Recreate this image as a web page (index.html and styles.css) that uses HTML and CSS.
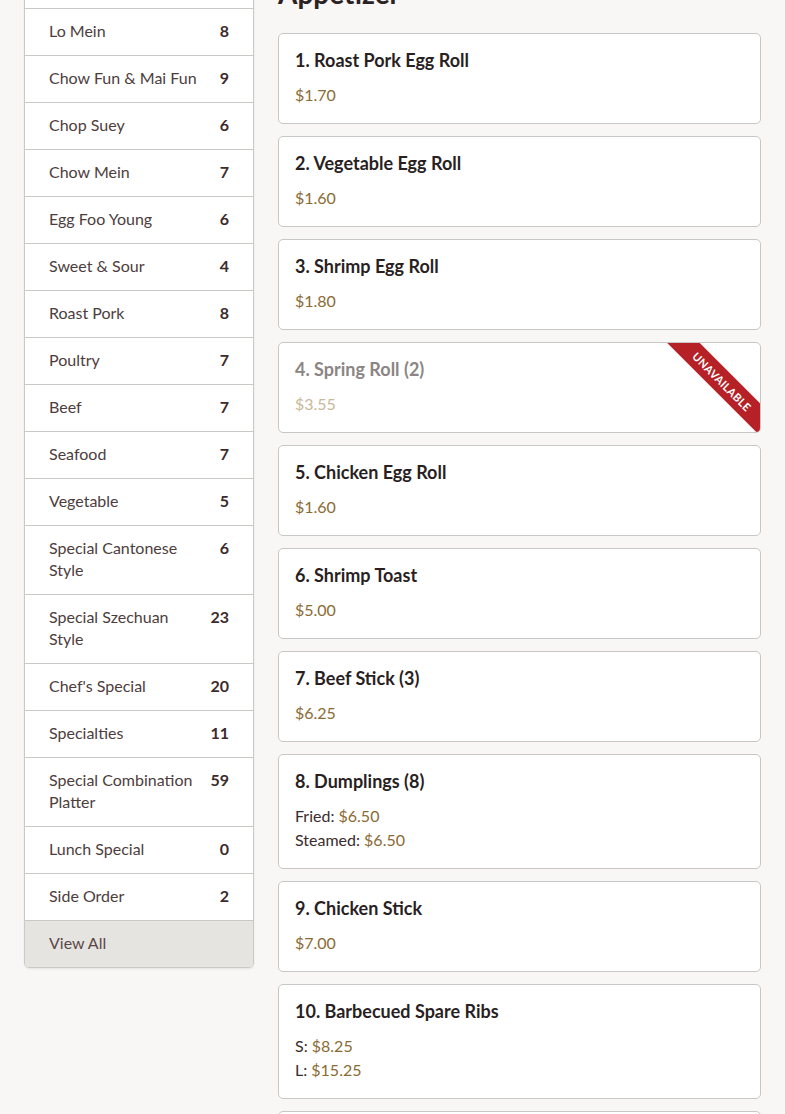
FILE: index.html
```html
<!DOCTYPE html>
<html lang="en">
<head>
<meta charset="utf-8">
<title>Menu</title>
<link rel="stylesheet" href="styles.css">
</head>
<body>
<div class="page">
  <aside class="sidebar">
    <div class="cat"><span class="name">Appetizer</span><span class="count">14</span></div>
    <div class="cat"><span class="name">Lo Mein</span><span class="count">8</span></div>
    <div class="cat"><span class="name">Chow Fun &amp; Mai Fun</span><span class="count">9</span></div>
    <div class="cat"><span class="name">Chop Suey</span><span class="count">6</span></div>
    <div class="cat"><span class="name">Chow Mein</span><span class="count">7</span></div>
    <div class="cat"><span class="name">Egg Foo Young</span><span class="count">6</span></div>
    <div class="cat"><span class="name">Sweet &amp; Sour</span><span class="count">4</span></div>
    <div class="cat"><span class="name">Roast Pork</span><span class="count">8</span></div>
    <div class="cat"><span class="name">Poultry</span><span class="count">7</span></div>
    <div class="cat"><span class="name">Beef</span><span class="count">7</span></div>
    <div class="cat"><span class="name">Seafood</span><span class="count">7</span></div>
    <div class="cat"><span class="name">Vegetable</span><span class="count">5</span></div>
    <div class="cat"><span class="name">Special Cantonese Style</span><span class="count">6</span></div>
    <div class="cat"><span class="name">Special Szechuan Style</span><span class="count">23</span></div>
    <div class="cat"><span class="name">Chef's Special</span><span class="count">20</span></div>
    <div class="cat"><span class="name">Specialties</span><span class="count">11</span></div>
    <div class="cat"><span class="name">Special Combination Platter</span><span class="count">59</span></div>
    <div class="cat"><span class="name">Lunch Special</span><span class="count">0</span></div>
    <div class="cat"><span class="name">Side Order</span><span class="count">2</span></div>
    <div class="cat all"><span class="name">View All</span></div>
  </aside>
  <main class="main">
    <h2 class="section-title">Appetizer</h2>
    <div class="card"><h5 class="title">1. Roast Pork Egg Roll</h5><div class="line"><span class="price">$1.70</span></div></div>
    <div class="card"><h5 class="title">2. Vegetable Egg Roll</h5><div class="line"><span class="price">$1.60</span></div></div>
    <div class="card"><h5 class="title">3. Shrimp Egg Roll</h5><div class="line"><span class="price">$1.80</span></div></div>
    <div class="card unavailable"><h5 class="title">4. Spring Roll (2)</h5><div class="line"><span class="price">$3.55</span></div><div class="ribbon">Unavailable</div></div>
    <div class="card"><h5 class="title">5. Chicken Egg Roll</h5><div class="line"><span class="price">$1.60</span></div></div>
    <div class="card"><h5 class="title">6. Shrimp Toast</h5><div class="line"><span class="price">$5.00</span></div></div>
    <div class="card"><h5 class="title">7. Beef Stick (3)</h5><div class="line"><span class="price">$6.25</span></div></div>
    <div class="card"><h5 class="title">8. Dumplings (8)</h5><div class="line">Fried: <span class="price">$6.50</span></div><div class="line">Steamed: <span class="price">$6.50</span></div></div>
    <div class="card"><h5 class="title">9. Chicken Stick</h5><div class="line"><span class="price">$7.00</span></div></div>
    <div class="card"><h5 class="title">10. Barbecued Spare Ribs</h5><div class="line">S: <span class="price">$8.25</span></div><div class="line">L: <span class="price">$15.25</span></div></div>
    <div class="card"><h5 class="title">11. Boneless Spare Ribs</h5><div class="line">S: <span class="price">$8.75</span></div><div class="line">L: <span class="price">$15.95</span></div></div>
  </main>
</div>
</body>
</html>
```
FILE: styles.css
```css
html, body {
  margin: 0;
  padding: 0;
}
body {
  background: #f8f7f5;
  font-family: "Lato", "Noto Sans", sans-serif;
  color: #3a2c2c;
  overflow: hidden;
}
.page {
  display: flex;
  align-items: flex-start;
  gap: 24px;
  padding: 0 24px;
  margin-top: -39px;
}
.sidebar {
  width: 230px;
  flex: none;
  box-sizing: border-box;
  background: #fff;
  border: 1px solid #cbc9c7;
  border-radius: 5px;
  overflow: hidden;
  box-shadow: 0 1px 2px rgba(0,0,0,0.08);
}
.cat {
  display: flex;
  justify-content: space-between;
  align-items: flex-start;
  gap: 8px;
  padding: 11px 24px 13px;
  font-size: 16px;
  line-height: 22px;
  color: #4d3d3d;
  border-bottom: 1px solid #cbc9c7;
}
.cat:last-child {
  border-bottom: none;
}
.count {
  font-weight: 700;
  color: #3c2b2b;
  flex: none;
}
.cat.all {
  background: #e6e4e1;
  color: #5a4848;
}
.main {
  flex: 1;
  min-width: 0;
}
.section-title {
  font-size: 28px;
  line-height: 34px;
  font-weight: 700;
  margin: 15px 0 23px;
  color: #2d2222;
}
.card {
  position: relative;
  overflow: hidden;
  background: #fff;
  border: 1px solid #c9c7c5;
  border-radius: 5px;
  padding: 16px;
  margin-bottom: 12px;
}
.title {
  margin: 0 0 13px;
  font-size: 18px;
  line-height: 20px;
  font-weight: 700;
  color: #2a1f1f;
}
.line {
  font-size: 16px;
  line-height: 24px;
  color: #3a2c2c;
}
.price {
  color: #8a6b34;
}
.unavailable .title {
  color: #8b8584;
}
.unavailable .price {
  color: #c9b89a;
}
.ribbon {
  position: absolute;
  width: 160px;
  height: 23px;
  left: 363px;
  top: 27px;
  transform: rotate(45deg);
  background: #b52126;
  color: #fff;
  font-size: 11px;
  font-weight: 700;
  line-height: 23px;
  text-align: center;
  text-transform: uppercase;
  letter-spacing: 0.3px;
}
```
